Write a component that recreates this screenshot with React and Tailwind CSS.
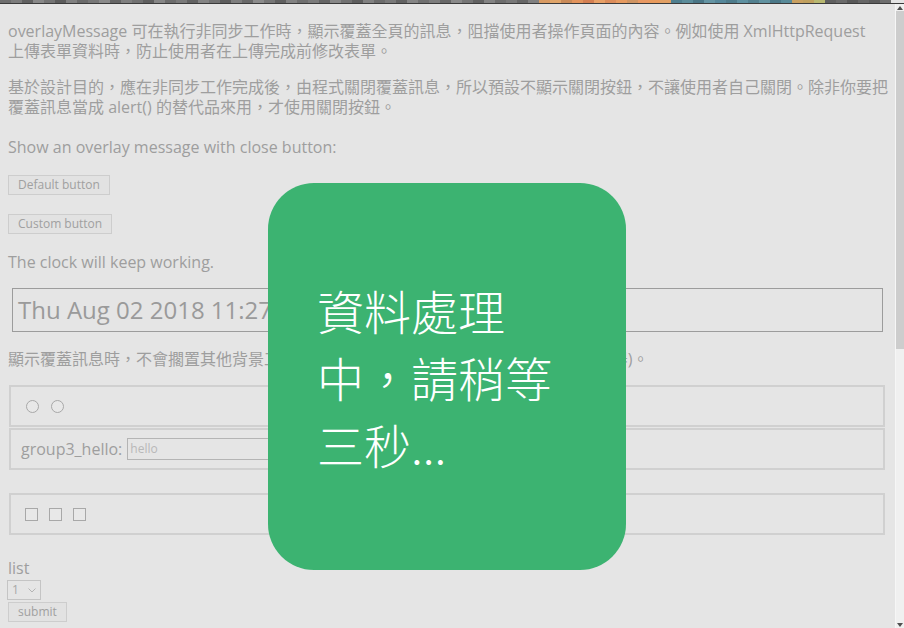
import React from 'react';

const stripTiles = [
  '#6e6e6e', '#7c7c7c', '#616161', '#888888', '#747474', '#5c5c5c', '#808080', '#6a6a6a', '#777777', '#8a8a8a',
  '#656565', '#7f7f7f', '#717171', '#5f5f5f', '#868686', '#6c6c6c', '#7a7a7a', '#636363', '#848484', '#737373',
  '#5d5d5d', '#7e7e7e', '#696969', '#8b8b8b', '#767676', '#606060', '#828282', '#6f6f6f', '#7b7b7b', '#646464',
  '#878787', '#727272', '#5e5e5e', '#818181', '#6b6b6b', '#797979', '#626262', '#858585', '#707070', '#7d7d7d',
  '#676767', '#898989', '#757575', '#616161', '#838383', '#6d6d6d', '#787878', '#666666', '#808080',
  '#d89a62', '#e0a56a', '#c98a58', '#e2935c', '#d47f52', '#e8a066', '#dc8c5a', '#e69a60', '#cf9462', '#e89862',
  '#e89a5c', '#e2a064', '#4f7f8f', '#5b8c9a', '#4a7686', '#6494a3', '#55879a', '#4d7b8b', '#5d90a0', '#52808f',
  '#6192a0', '#4b7888', '#588a98', '#c9a060', '#bfa05e', '#b8b870', '#5f5f5f', '#6a6a6a', '#585858', '#666666',
  '#5c5c5c', '#6e6e6e',
];

function Radio() {
  return <span className="block w-[13px] h-[13px] rounded-full border border-[#a8a8a8] bg-[#e8e8e8]" />;
}

function Check() {
  return <span className="block w-[13px] h-[13px] border border-[#a8a8a8] bg-[#e8e8e8]" />;
}

function Btn({ children, className = '' }) {
  return (
    <button
      type="button"
      className={`h-[20px] px-[9px] text-[12px] leading-[18px] text-[#a0a0a0] bg-[#e2e2e2] border border-[#cdcdcd] ${className}`}
    >
      {children}
    </button>
  );
}

export default function App() {
  return (
    <div
      className="relative w-[904px] h-[628px] overflow-hidden bg-[#e5e5e5] text-[#9e9e9e]"
      style={{ fontFamily: '"Open Sans", "Noto Sans CJK TC", sans-serif' }}
    >
      <div className="flex h-[4px] border-b border-[#3a3a3a]">
        {stripTiles.map((c, i) => (
          <div key={i} className="w-[11px] shrink-0" style={{ background: c }} />
        ))}
      </div>

      <div className="flex h-[624px]">
        <div className="flex-1 pl-[8px] pr-[7px] text-[16px] leading-[20px]">
          <p className="mt-[17px] mr-[8px]">
            overlayMessage 可在執行非同步工作時，顯示覆蓋全頁的訊息，阻擋使用者操作頁面的內容。例如使用 XmlHttpRequest 上傳表單資料時，防止使用者在上傳完成前修改表單。
          </p>
          <p className="mt-[16px]">
            基於設計目的，應在非同步工作完成後，由程式關閉覆蓋訊息，所以預設不顯示關閉按鈕，不讓使用者自己關閉。除非你要把覆蓋訊息當成 alert() 的替代品來用，才使用關閉按鈕。
          </p>
          <p className="mt-[20px]">Show an overlay message with close button:</p>
          <div className="mt-[18px] flex">
            <Btn>Default button</Btn>
          </div>
          <div className="mt-[19px] flex">
            <Btn>Custom button</Btn>
          </div>
          <p className="mt-[18px]">The clock will keep working.</p>
          <div className="mt-[16px] ml-[4px] mr-[5px] h-[44px] border border-[#9c9c9c] flex items-center px-[5px] text-[24px] text-[#9a9a9a]">
            Thu Aug 02 2018 11:27:35 GMT+0800 (台北標準時間)
          </div>
          <p className="mt-[17px]">
            顯示覆蓋訊息時，不會擱置其他背景工作，時鐘仍然會繼續走動(使用 setInterval 計時器)。
          </p>

          <div className="mt-[16px] ml-[1px] mr-[3px] h-[42px] border-2 border-[#d0d0d0] flex items-center gap-[12px] px-[15px]">
            <Radio />
            <Radio />
          </div>
          <div className="mt-[1px] ml-[1px] mr-[3px] h-[42px] border-2 border-[#d0d0d0] flex items-center px-[10px]">
            <span>group3_hello:</span>
            <span className="ml-[5px] w-[200px] h-[22px] border border-[#b4b4b4] flex items-center px-[2px] text-[12px] text-[#b8b8b8]">
              hello
            </span>
          </div>
          <div className="mt-[23px] ml-[1px] mr-[3px] h-[42px] border-2 border-[#d0d0d0] flex items-center gap-[11px] px-[14px]">
            <Check />
            <Check />
            <Check />
          </div>

          <p className="mt-[23px]">list</p>
          <div className="mt-[2px] -ml-[1px] w-[34px] h-[20px] border border-[#c4c4c4] flex items-center justify-between px-[4px] text-[12px] text-[#a8a8a8]">
            <span>1</span>
            <svg width="8" height="5" viewBox="0 0 8 5" fill="none">
              <path d="M0.5 0.5 L4 4 L7.5 0.5" stroke="#b4b4b4" strokeWidth="1" />
            </svg>
          </div>
          <div className="mt-[2px] flex">
            <Btn>submit</Btn>
          </div>
        </div>

        <div className="w-[9px] shrink-0 bg-[#f0f0f0] border-l border-[#f6f6f6] flex flex-col">
          <div className="h-[7px] flex items-center justify-center">
            <svg width="6" height="4" viewBox="0 0 6 4">
              <path d="M0 4 L3 0 L6 4 Z" fill="#505050" />
            </svg>
          </div>
          <div className="h-[338px] bg-[#cdcdcd]" />
          <div className="flex-1" />
          <div className="h-[7px] flex items-center justify-center">
            <svg width="6" height="4" viewBox="0 0 6 4">
              <path d="M0 0 L3 4 L6 0 Z" fill="#505050" />
            </svg>
          </div>
        </div>
      </div>

      <div
        className="absolute left-[268px] top-[183px] w-[358px] h-[387px] rounded-[46px] bg-[#3cb371] flex items-center pl-[49px] pr-[50px] text-white text-[47px] leading-[67px] font-light"
        style={{ fontFamily: '"Noto Sans CJK TC", sans-serif' }}
      >
        <div>資料處理中，請稍等三秒...</div>
      </div>
    </div>
  );
}
